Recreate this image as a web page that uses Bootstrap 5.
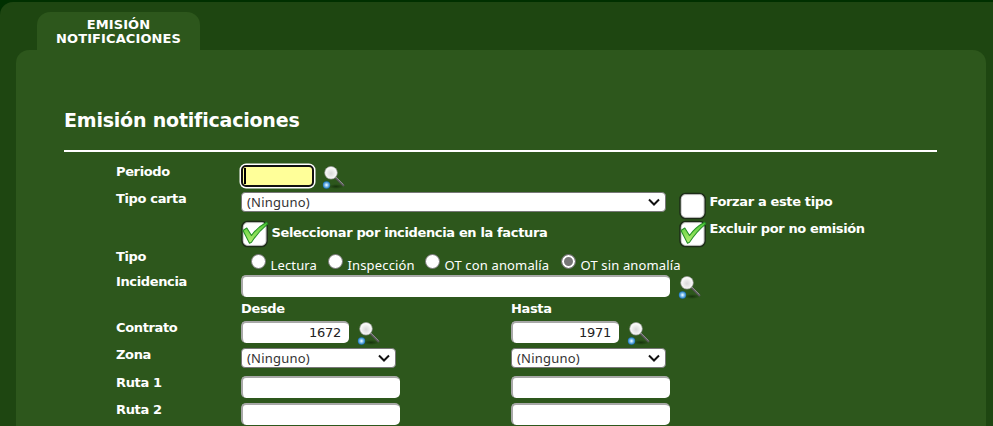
<!DOCTYPE html>
<html lang="es">
<head>
<meta charset="utf-8">
<title>Emisión notificaciones</title>
<meta name="viewport" content="width=device-width, initial-scale=1">
<link href="https://cdn.jsdelivr.net/npm/bootstrap@5.3.0/dist/css/bootstrap.min.css" rel="stylesheet">
<style>
html,body{height:100%;overflow:hidden}
body{background:#003000;color:#fff;font:13px/18px Verdana,"DejaVu Sans",sans-serif}
.shell{background:#1e4611;border-top-left-radius:13px;height:424px;margin-top:2px;padding:10px 7px 0 16px}
.tab{background:#2d571c;width:163px;height:38px;margin-left:21px;border-radius:13px 13px 0 0;padding-top:6px;font-size:13px;line-height:14px;letter-spacing:.1px}
.panel{background:#2d571c;border-radius:13px 13px 0 0;height:376px;padding:56px 49px 0 48px}
.heading{font-size:19px;line-height:28px;height:46px;border-bottom:2px solid #fff;margin:0 0 10px;letter-spacing:-.2px}
.fields{padding-left:52px}
.line{height:27px}
.line-28{height:28px}
.line-30{height:30px}
.line-25{height:25px}
.line-19{height:19px}
.lbl{width:125px;padding-top:1px}
.cell{width:270px}
.wide{width:438px}
.strong-text{font-weight:700;letter-spacing:-.36px;white-space:nowrap}
.side-text{margin-left:2.5px;padding-top:4px}
.side-text-up{padding-top:3px}
.side-text-low{padding-top:7px}
.inp{border:0 solid #a8a8a8;border-width:2px 0 0 2px;border-radius:5px;background:#fff;color:#222;height:22px;margin-top:3px;padding:0 8px 2px 6px;font:13px/18px Verdana,"DejaVu Sans",sans-serif;letter-spacing:-.3px;outline:0}
.w-code{width:108px}
.w-route{width:159px}
.w-long{width:429px}
.pick{border:1px solid #777;border-radius:4px;background:#fff;color:#333;height:20px;margin-top:3px;padding:0 5px;font-family:"Noto Sans",Verdana,sans-serif;letter-spacing:.2px}
.pick-long{width:425px}
.pick-short{width:155px}
.focused{width:73px;height:22px;background:#ff9;border:2px solid #111;border-radius:5px;box-shadow:0 0 0 1.5px #fff;margin:3px 0 0;padding:1px}
.caret{width:2px;height:16px;background:#000}
.lens{width:24px;height:25px;margin-top:2px}
.check-icon{width:28px;height:28px;margin-top:3px}
.opts{font-family:"Noto Sans",Verdana,sans-serif;letter-spacing:.15px;padding-left:10px;white-space:nowrap}
.opt-text{margin:9px 0 0 4.5px}
.dot{width:15px;height:15px;border:1px solid #777;border-radius:50%;background:#fff;margin-top:7px}
.dot-on{background:#777;box-shadow:inset 0 0 0 2px #fff}
.opt-1{width:77px}.opt-2{width:97px}.opt-3{width:136px}
.gap-lens{margin-left:8px}
</style>
</head>
<body>
<svg class="position-absolute" width="0" height="0" aria-hidden="true">
  <defs>
    <radialGradient id="glass" cx=".5" cy=".55" r=".5"><stop offset="0" stop-color="#d8d8d8"/><stop offset=".55" stop-color="#ececec"/><stop offset="1" stop-color="#fff"/></radialGradient>
    <radialGradient id="blue"><stop offset="0" stop-color="#fff"/><stop offset=".35" stop-color="#9ed2f5"/><stop offset="1" stop-color="#1672bd"/></radialGradient>
    <radialGradient id="shade"><stop offset="0" stop-color="#102808" stop-opacity=".75"/><stop offset="1" stop-color="#102808" stop-opacity="0"/></radialGradient>
    <linearGradient id="green" x2="0" y2="1"><stop offset="0" stop-color="#50cc35"/><stop offset="1" stop-color="#b4ed70"/></linearGradient>
  </defs>
  <symbol id="lens" viewBox="0 0 24 25">
    <ellipse cx="14" cy="22.5" rx="8" ry="2.5" fill="url(#shade)"/>
    <path d="M13.5 13.5L22 22" stroke="#555" stroke-width="2.2"/>
    <path d="M13.8 13L21.5 20.7" stroke="#aaa" stroke-width=".8"/>
    <circle cx="9" cy="8.8" r="6.3" fill="url(#glass)" stroke="#999" stroke-width=".7"/>
    <circle cx="4.5" cy="21" r="3.7" fill="url(#blue)"/>
  </symbol>
  <symbol id="box" viewBox="0 0 28 28">
    <rect x="1.1" y="1.5" width="25" height="25" rx="5.5" fill="#fff" stroke="#1c2b17" stroke-width="1.6"/>
    <rect x="2.2" y="2.6" width="22.8" height="22.8" rx="4.5" fill="none" stroke="#aaa" stroke-width=".7"/>
  </symbol>
  <symbol id="tick" viewBox="0 0 28 28">
    <path d="M2 10.5L5.8 8L10.5 15.5Q16 7.5 25.5 2.2L26.7 3.8Q17 12 10.5 22.3L8.5 23.2Z" fill="url(#green)" stroke="#269126" stroke-width="1.1" stroke-linejoin="round"/>
  </symbol>
</svg>
<main class="shell">
  <div class="tab text-center fw-bold">EMISIÓN<br>NOTIFICACIONES</div>
  <section class="panel">
    <h1 class="heading fw-bold">Emisión notificaciones</h1>
    <form class="fields">
      <div class="line d-flex">
        <div class="lbl flex-shrink-0 strong-text">Periodo</div>
        <div class="focused"><div class="caret"></div></div>
        <svg class="lens gap-lens"><use href="#lens"/></svg>
      </div>
      <div class="line-28 d-flex">
        <div class="lbl flex-shrink-0 strong-text">Tipo carta</div>
        <div class="wide flex-shrink-0">
          <div class="pick pick-long d-flex align-items-center justify-content-between"><span>(Ninguno)</span><svg width="12" height="8"><path d="M1 1.5L6 6.5L11 1.5" fill="none" stroke="#111" stroke-width="2"/></svg></div>
        </div>
        <svg class="check-icon flex-shrink-0"><use href="#box"/></svg>
        <span class="strong-text side-text">Forzar a este tipo</span>
      </div>
      <div class="line-30 d-flex">
        <div class="lbl flex-shrink-0"></div>
        <div class="wide d-flex flex-shrink-0">
          <svg class="check-icon"><use href="#box"/><use href="#tick"/></svg>
          <span class="strong-text side-text side-text-low">Seleccionar por incidencia en la factura</span>
        </div>
        <svg class="check-icon flex-shrink-0"><use href="#box"/><use href="#tick"/></svg>
        <span class="strong-text side-text side-text-up">Excluir por no emisión</span>
      </div>
      <div class="line-25 d-flex">
        <div class="lbl flex-shrink-0 strong-text">Tipo</div>
        <div class="opts d-flex">
          <div class="opt-1 d-flex"><i class="dot"></i><span class="opt-text">Lectura</span></div>
          <div class="opt-2 d-flex"><i class="dot"></i><span class="opt-text">Inspección</span></div>
          <div class="opt-3 d-flex"><i class="dot"></i><span class="opt-text">OT con anomalía</span></div>
          <div class="d-flex"><i class="dot dot-on"></i><span class="opt-text">OT sin anomalía</span></div>
        </div>
      </div>
      <div class="line d-flex">
        <div class="lbl flex-shrink-0 strong-text">Incidencia</div>
        <input class="inp w-long" type="text">
        <svg class="lens gap-lens"><use href="#lens"/></svg>
      </div>
      <div class="line-19 d-flex strong-text">
        <div class="lbl"></div><div class="cell pt-0 mt-0 lh-base">Desde</div><div class="lh-base">Hasta</div>
      </div>
      <div class="line d-flex">
        <div class="lbl flex-shrink-0 strong-text">Contrato</div>
        <div class="cell d-flex"><input class="inp w-code text-end" type="text" value="1672"><svg class="lens gap-lens"><use href="#lens"/></svg></div>
        <div class="cell d-flex"><input class="inp w-code text-end" type="text" value="1971"><svg class="lens gap-lens"><use href="#lens"/></svg></div>
      </div>
      <div class="line-28 d-flex">
        <div class="lbl flex-shrink-0 strong-text">Zona</div>
        <div class="cell"><div class="pick pick-short d-flex align-items-center justify-content-between"><span>(Ninguno)</span><svg width="12" height="8"><path d="M1 1.5L6 6.5L11 1.5" fill="none" stroke="#111" stroke-width="2"/></svg></div></div>
        <div class="cell"><div class="pick pick-short d-flex align-items-center justify-content-between"><span>(Ninguno)</span><svg width="12" height="8"><path d="M1 1.5L6 6.5L11 1.5" fill="none" stroke="#111" stroke-width="2"/></svg></div></div>
      </div>
      <div class="line d-flex">
        <div class="lbl flex-shrink-0 strong-text">Ruta 1</div>
        <div class="cell d-flex"><input class="inp w-route" type="text"></div>
        <div class="cell d-flex"><input class="inp w-route" type="text"></div>
      </div>
      <div class="line d-flex">
        <div class="lbl flex-shrink-0 strong-text">Ruta 2</div>
        <div class="cell d-flex"><input class="inp w-route" type="text"></div>
        <div class="cell d-flex"><input class="inp w-route" type="text"></div>
      </div>
    </form>
  </section>
</main>
</body>
</html>
